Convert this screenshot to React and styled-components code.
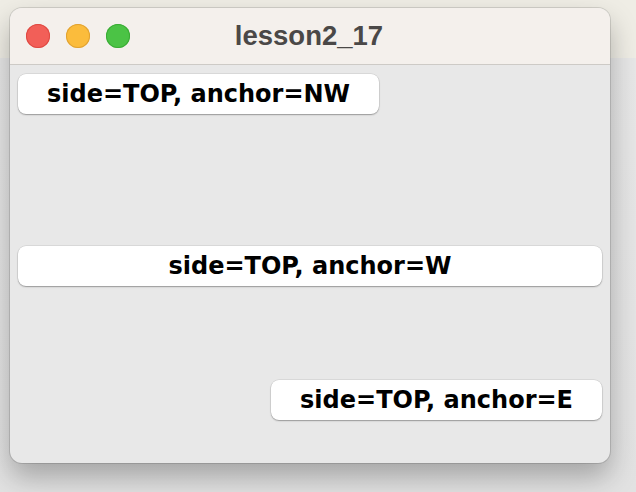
import React from "react";
import styled, { createGlobalStyle } from "styled-components";

const GlobalStyle = createGlobalStyle`
  html, body {
    margin: 0;
    padding: 0;
    width: 636px;
    height: 492px;
    overflow: hidden;
    background: linear-gradient(to bottom, #efede5 0, #efede5 58px, #e7e7e7 58px, #e2e2e2 100%);
  }
`;

const Desktop = styled.div`
  padding: 8px 26px 0 10px;
`;

const Window = styled.div`
  width: 600px;
  height: 455px;
  border-radius: 12px;
  overflow: hidden;
  background: #e8e8e8;
  box-shadow: 0 0 0 1px rgba(0, 0, 0, 0.12), 0 14px 28px rgba(0, 0, 0, 0.28);
  display: flex;
  flex-direction: column;
`;

const TitleBar = styled.div`
  height: 56px;
  flex-shrink: 0;
  background: #f4f0ec;
  border-bottom: 1px solid #cdcac6;
  display: flex;
  align-items: center;
  padding-left: 16px;
  position: relative;
`;

const Lights = styled.div`
  display: flex;
  gap: 16px;
`;

const Light = styled.span`
  width: 24px;
  height: 24px;
  border-radius: 50%;
  background: ${(p) => p.$color};
  box-shadow: inset 0 0 0 1px ${(p) => p.$edge};
`;

const Title = styled.div`
  position: absolute;
  left: 0;
  right: 0;
  top: 0;
  bottom: 0;
  display: flex;
  align-items: center;
  justify-content: center;
  padding-right: 2px;
  font-family: "Liberation Sans", Arial, sans-serif;
  font-weight: bold;
  font-size: 27.5px;
  color: #4a4847;
  pointer-events: none;
`;

const Content = styled.div`
  flex: 1;
  display: flex;
  flex-direction: column;
  padding: 9px 8px 0 8px;
`;

const Button = styled.button`
  align-self: ${(p) => p.$align};
  margin-top: ${(p) => p.$top}px;
  height: 40px;
  padding: 0 29px;
  border: none;
  border-radius: 8px;
  background: #ffffff;
  box-shadow: 0 0 0 0.5px rgba(0, 0, 0, 0.12), 0 1px 1.5px rgba(0, 0, 0, 0.3);
  font-family: "DejaVu Sans", Verdana, sans-serif;
  font-weight: bold;
  font-size: 24px;
  color: #000;
  white-space: nowrap;
  cursor: default;
`;

const buttons = [
  { label: "side=TOP, anchor=NW", align: "flex-start", top: 0 },
  { label: "side=TOP, anchor=W", align: "stretch", top: 132 },
  { label: "side=TOP, anchor=E", align: "flex-end", top: 94 },
];

export default function App() {
  return (
    <>
      <GlobalStyle />
      <Desktop>
        <Window>
          <TitleBar>
            <Lights>
              <Light $color="#f25f58" $edge="#de4a43" />
              <Light $color="#fbbc3c" $edge="#e0a233" />
              <Light $color="#4bc345" $edge="#3aab35" />
            </Lights>
            <Title>lesson2_17</Title>
          </TitleBar>
          <Content>
            {buttons.map((b) => (
              <Button key={b.label} $align={b.align} $top={b.top}>
                {b.label}
              </Button>
            ))}
          </Content>
        </Window>
      </Desktop>
    </>
  );
}
